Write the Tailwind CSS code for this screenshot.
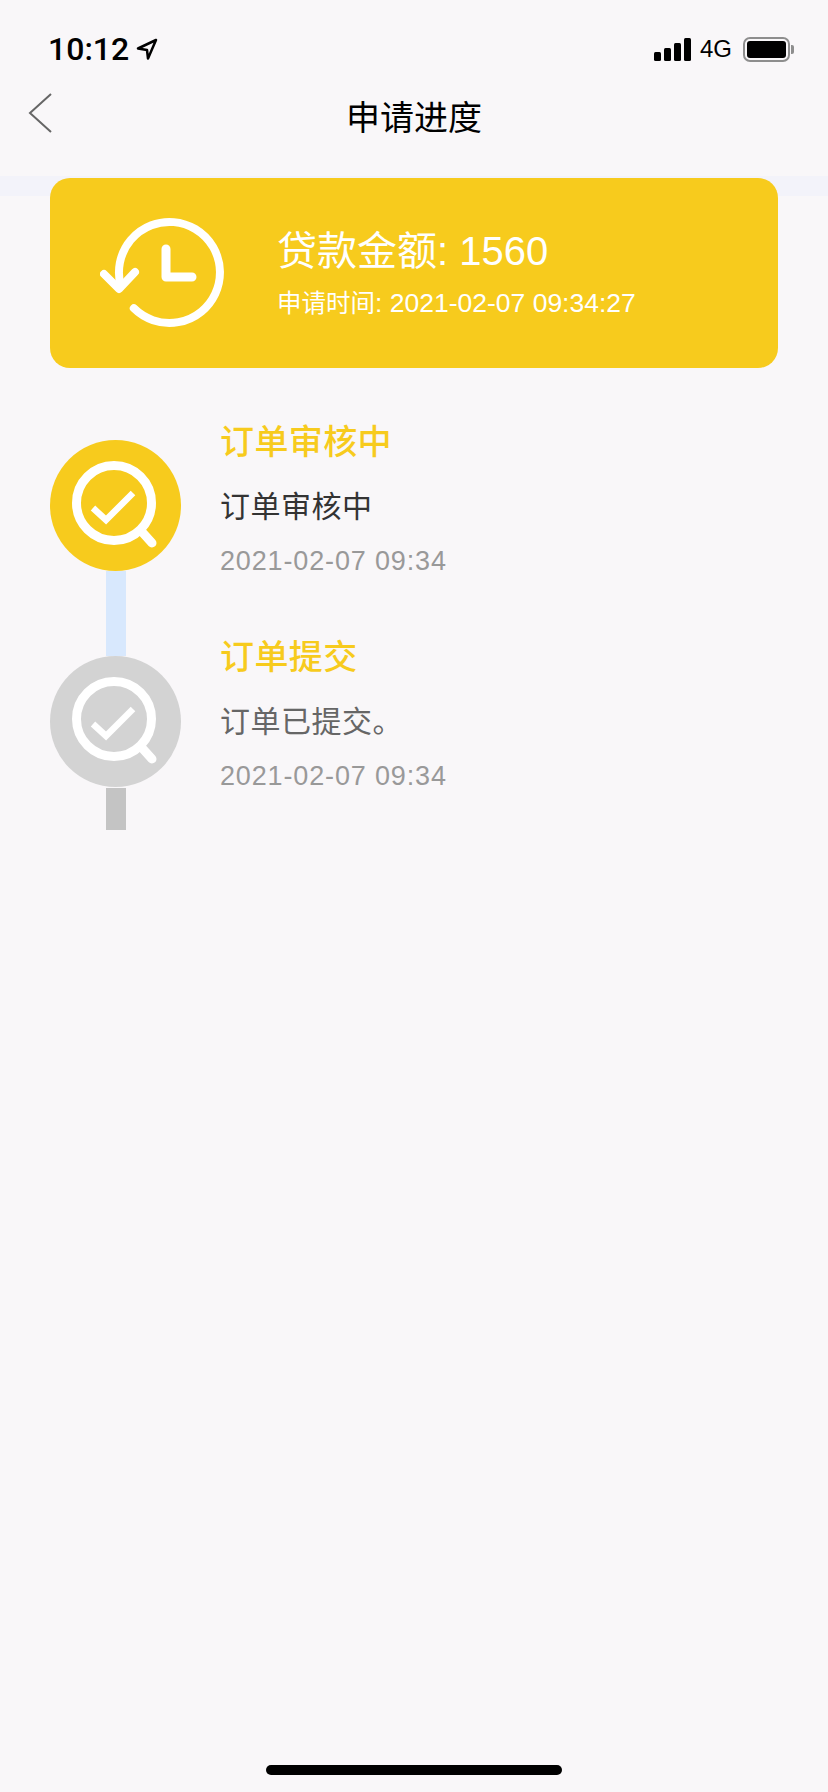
<!DOCTYPE html>
<html lang="zh-CN">
<head>
  <meta charset="UTF-8">
  <title>申请进度</title>
  <script src="https://cdn.jsdelivr.net/npm/@tailwindcss/browser@4"></script>
</head>
<body class="bg-[#f9f7f9] font-['Liberation_Sans','Noto_Sans_CJK_SC',sans-serif]">
  <div class="flex flex-col w-[828px] h-[1792px] overflow-hidden">
    <!-- status bar -->
    <div class="flex items-center justify-between h-[50px] mt-[24px] pl-[48px] pr-[34px]">
      <div class="flex items-center gap-[7px]">
        <span class="font-['Roboto'] font-medium text-[32px] leading-none text-black">10:12</span>
        <svg class="w-[22px] h-[22px]" viewBox="0 0 22 22" fill="none" stroke="#000" stroke-width="2.5" stroke-linejoin="round"><path d="M20 2 2 10.5l9 1.5 1 8.5z"/></svg>
      </div>
      <div class="flex items-center">
        <div class="flex items-end gap-[3.5px] h-[23px]">
          <div class="w-[6.5px] h-[9px] bg-black rounded-[1.5px]"></div>
          <div class="w-[6.5px] h-[13px] bg-black rounded-[1.5px]"></div>
          <div class="w-[6.5px] h-[18px] bg-black rounded-[1.5px]"></div>
          <div class="w-[6.5px] h-[23px] bg-black rounded-[1.5px]"></div>
        </div>
        <span class="ml-[9px] text-[24px] leading-none text-black">4G</span>
        <div class="ml-[11px] flex items-center">
          <div class="w-[47px] h-[25px] p-[2px] border-2 border-[#8e8e8e] rounded-[7px]">
            <div class="w-full h-full bg-black rounded-[3px]"></div>
          </div>
          <div class="ml-[1px] w-[3px] h-[9px] bg-[#8e8e8e] rounded-r-[2px]"></div>
        </div>
      </div>
    </div>

    <!-- nav -->
    <div class="relative flex items-center justify-center h-[70px] mt-[8px]">
      <svg class="absolute left-[28px] top-[11px] w-[24px] h-[40px]" viewBox="0 0 24 40" fill="none" stroke="#666" stroke-width="2"><path d="M23 1 2 20l21 19"/></svg>
      <h1 class="mt-[2px] text-[34px] leading-none text-black">申请进度</h1>
    </div>

    <!-- band behind card -->
    <div class="h-[20px] mt-[24px] bg-[#f3f3fa]"></div>

    <!-- amount card -->
    <div class="flex items-center h-[190px] mx-[50px] -mt-[18px] bg-[#f7cb1d] rounded-[20px]">
      <svg class="ml-[50px] w-[130px] h-[120px] shrink-0" viewBox="100 213 130 120" fill="none" stroke="#fff" stroke-linecap="round" stroke-linejoin="round">
        <path stroke-width="8" d="M120.7 285.6A50.5 50.5 0 1 1 133.8 308.2"/>
        <path stroke-width="8" d="M104 274l15 15 16-17"/>
        <path stroke-width="9" d="M166 249v28h26"/>
      </svg>
      <div class="ml-[47px] pt-[2px] text-white">
        <div class="text-[40px] leading-none">贷款金额: 1560</div>
        <div class="mt-[19px] text-[26.5px] leading-none"><span class="text-[24.5px]">申请时间</span>: 2021-02-07 09:34:27</div>
      </div>
    </div>

    <!-- timeline -->
    <div class="flex flex-col mt-[72px] ml-[50px]">
      <div class="flex">
        <div class="flex flex-col items-center w-[131px]">
          <div class="w-[131px] h-[131px] rounded-full bg-[#f7cb1d]">
            <svg class="w-[131px] h-[131px]" viewBox="0 0 131 131" fill="none" stroke="#fff">
              <circle cx="64" cy="63" r="37.5" stroke-width="9"/>
              <path stroke-width="9" stroke-linecap="round" d="M93 93l9 10"/>
              <path stroke-width="6.5" d="M43 68l13 12 27-27"/>
            </svg>
          </div>
          <div class="w-[20px] h-[85px] bg-[#d8e8fd]"></div>
        </div>
        <div class="ml-[39px] -mt-[15px]">
          <div class="text-[34px] leading-none font-medium tracking-[0.4px] text-[#f7cb1d]">订单审核中</div>
          <div class="mt-[33px] text-[30px] leading-none tracking-[0.5px] text-[#333]">订单审核中</div>
          <div class="mt-[26px] text-[27px] leading-none tracking-[0.85px] text-[#999]">2021-02-07 09:34</div>
        </div>
      </div>
      <div class="flex">
        <div class="flex flex-col items-center w-[131px]">
          <div class="w-[131px] h-[131px] rounded-full bg-[#d3d3d3]">
            <svg class="w-[131px] h-[131px]" viewBox="0 0 131 131" fill="none" stroke="#fff">
              <circle cx="64" cy="63" r="37.5" stroke-width="9"/>
              <path stroke-width="9" stroke-linecap="round" d="M93 93l9 10"/>
              <path stroke-width="6.5" d="M43 68l13 12 27-27"/>
            </svg>
          </div>
          <div class="w-[20px] h-[42px] mt-[1px] bg-[#c4c4c4]"></div>
        </div>
        <div class="ml-[39px] -mt-[16px]">
          <div class="text-[34px] leading-none font-medium tracking-[0.4px] text-[#f7cb1d]">订单提交</div>
          <div class="mt-[33px] text-[30px] leading-none tracking-[0.5px] text-[#666]">订单已提交。</div>
          <div class="mt-[26px] text-[27px] leading-none tracking-[0.85px] text-[#999]">2021-02-07 09:34</div>
        </div>
      </div>
    </div>

    <div class="flex-1"></div>
    <div class="self-center w-[296px] h-[10px] mb-[17px] bg-black rounded-full"></div>
  </div>
</body>
</html>
